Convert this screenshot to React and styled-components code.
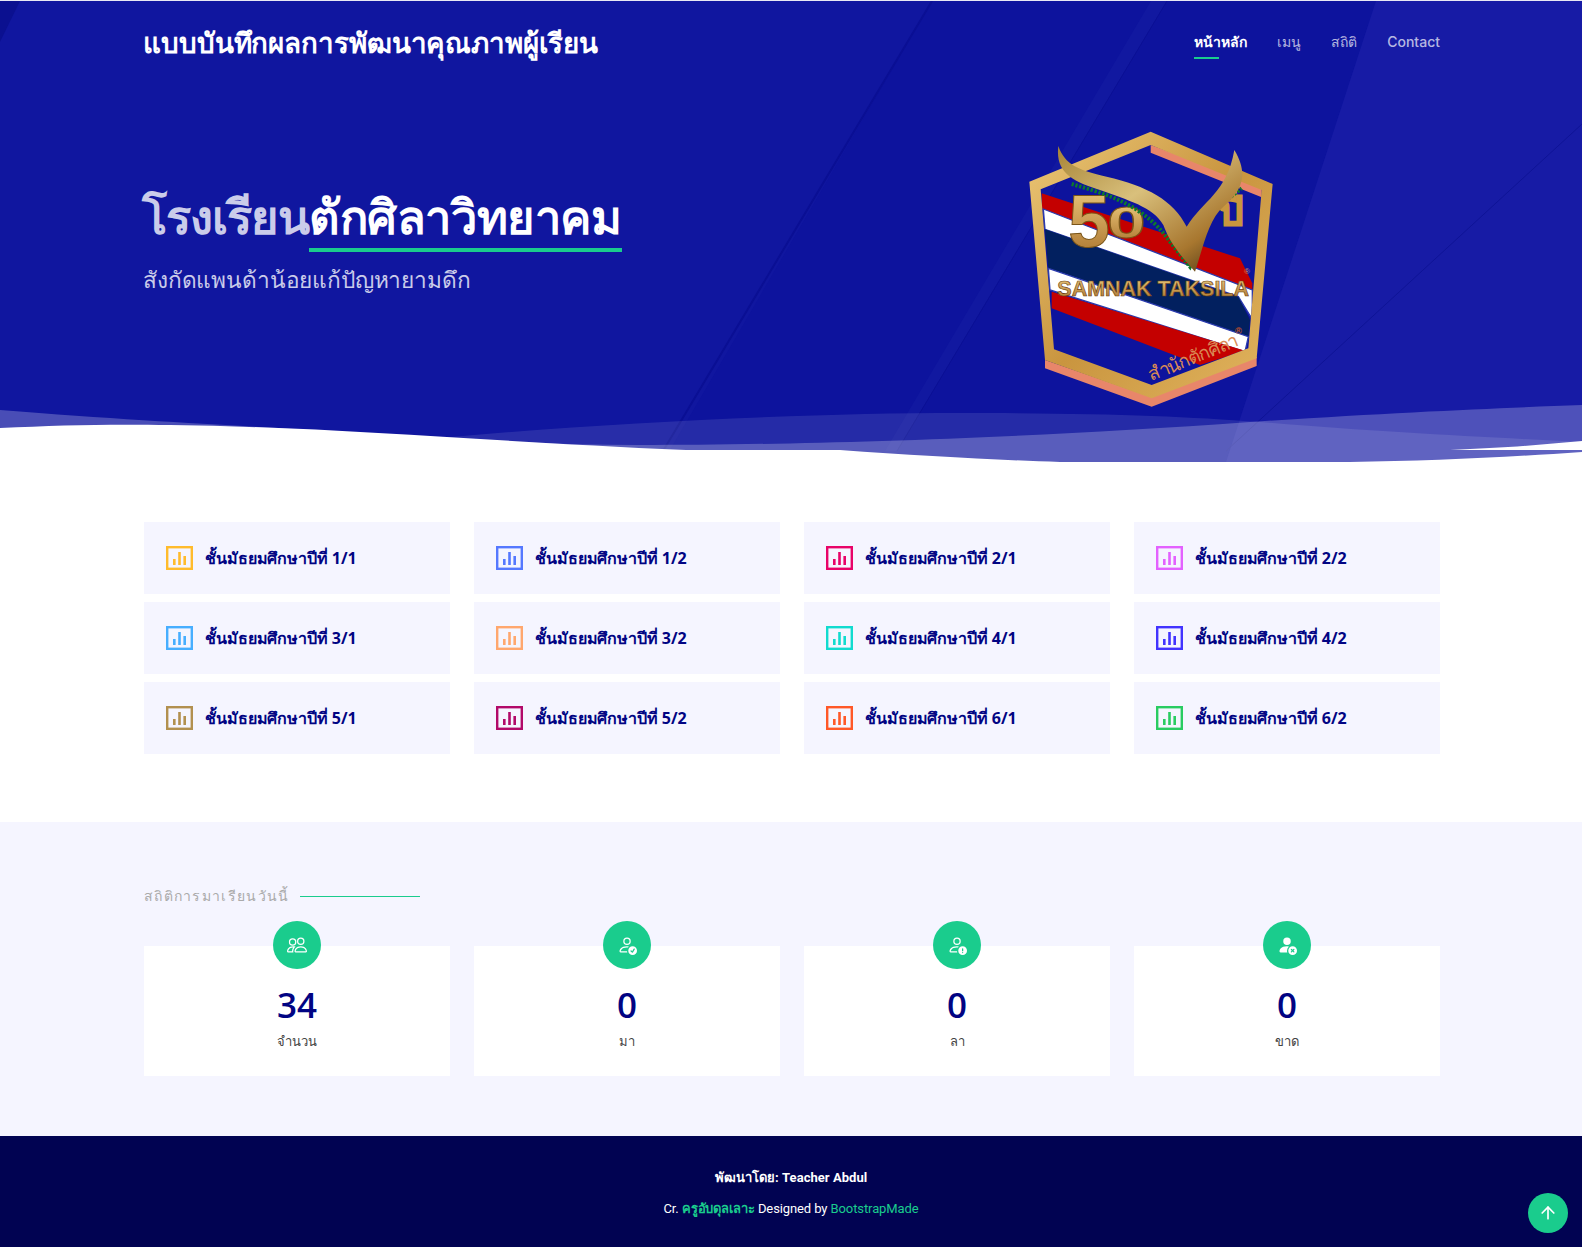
import React from "react";
import styled, { createGlobalStyle } from "styled-components";
import { BsPeople, BsPersonCheck, BsPersonExclamation, BsPersonFillX } from "react-icons/bs";
import { FiArrowUp } from "react-icons/fi";

const GlobalStyle = createGlobalStyle`
	* { box-sizing: border-box; }
	body {
		margin: 0;
		background: #fff;
		font-family: "Open Sans", "Noto Sans", sans-serif;
		color: #444;
	}
`;

const Container = styled.div`
	width: 1298px;
	margin: 0 auto;
	padding-left: 2px;
`;

const Hero = styled.section`
	position: relative;
	height: 462px;
	background: #10169f;
	border-top: 1px solid #e8e8f4;
	overflow: hidden;
`;

const HeroArt = styled.svg`
	position: absolute;
	inset: 0;
	width: 100%;
	height: 100%;
`;

const HeroInner = styled(Container)`
	position: relative;
`;

const Header = styled.header`
	display: flex;
	justify-content: space-between;
	align-items: flex-start;
	height: 84px;
`;

const Brand = styled.h1`
	margin: 23px 0 0 -1px;
	font-size: 27.75px;
	line-height: 36px;
	font-weight: 700;
	letter-spacing: -0.1px;
	color: #fff;
`;

const Nav = styled.nav`
	display: flex;
	gap: 30px;
	padding-top: 30px;
	font-family: Inter, "Noto Sans", sans-serif;
`;

const NavLink = styled.a`
	position: relative;
	height: 28px;
	font-size: 14px;
	line-height: 22px;
	font-weight: ${(props) => (props.$active ? 600 : 500)};
	color: ${(props) => (props.$active ? "#fff" : "rgba(255,255,255,.7)")};
	&::after {
		content: "";
		display: ${(props) => (props.$active ? "block" : "none")};
		position: absolute;
		left: 0;
		bottom: 0;
		width: 25px;
		height: 2px;
		background: #1acc8d;
	}
`;

const HeroBody = styled.div`
	display: flex;
	justify-content: space-between;
	align-items: flex-start;
`;

const HeroText = styled.div`
	padding-top: 97px;
`;

const HeroTitle = styled.h2`
	margin: 0 0 0 -2px;
	font-size: 47px;
	line-height: 69px;
	font-weight: 700;
	letter-spacing: -1px;
	color: rgba(255, 255, 255, 0.8);
`;

const HeroAccent = styled.span`
	display: inline-block;
	color: #fff;
	letter-spacing: -0.4px;
	border-bottom: 4px solid #1acc8d;
	line-height: 63px;
`;

const HeroSub = styled.h3`
	margin: 12px 0 0 -1px;
	font-size: 22.7px;
	line-height: 32px;
	font-weight: 400;
	letter-spacing: -0.15px;
	color: rgba(255, 255, 255, 0.78);
`;

const LogoWrap = styled.svg`
	display: block;
	width: 300px;
	height: 310px;
	margin: 25px 140px 0 0;
`;

const Classes = styled.section`
	padding: 60px 0 68px;
`;

const ClassGrid = styled.div`
	display: grid;
	grid-template-columns: repeat(4, 306px);
	column-gap: 24px;
	row-gap: 8px;
`;

const ClassCard = styled.a`
	display: flex;
	align-items: center;
	gap: 12px;
	height: 72px;
	padding-left: 22px;
	background: #f5f5ff;
`;

const ClassIcon = styled.svg`
	flex: none;
	width: 27px;
	height: 24px;
	color: ${(props) => props.$color};
`;

const ClassTitle = styled.span`
	font-size: 16px;
	font-weight: 700;
	letter-spacing: -0.1px;
	color: #010483;
`;

const Stats = styled.section`
	height: 314px;
	padding-top: 62px;
	background: #f5f5ff;
`;

const SectionLabel = styled.div`
	display: flex;
	align-items: center;
	gap: 10px;
	height: 24px;
	font-size: 14px;
	font-weight: 500;
	letter-spacing: 1.3px;
	color: #aaaaaa;
	&::after {
		content: "";
		width: 120px;
		height: 1px;
		background: #1acc8d;
	}
`;

const StatGrid = styled.div`
	display: grid;
	grid-template-columns: repeat(4, 306px);
	column-gap: 24px;
	margin-top: 38px;
`;

const StatCard = styled.div`
	position: relative;
	height: 130px;
	padding-top: 37px;
	background: #fff;
	text-align: center;
`;

const StatIcon = styled.div`
	position: absolute;
	top: -25px;
	left: 50%;
	width: 48px;
	height: 48px;
	margin-left: -24px;
	display: flex;
	align-items: center;
	justify-content: center;
	border-radius: 50%;
	background: #1acc8d;
	color: #fff;
	font-size: 20px;
`;

const StatNumber = styled.div`
	font-size: 35px;
	line-height: 44px;
	font-weight: 650;
	color: #010483;
`;

const StatLabel = styled.div`
	margin-top: 2px;
	font-size: 13px;
	line-height: 24px;
	color: #444;
`;

const Footer = styled.footer`
	height: 111px;
	padding-top: 30px;
	background: #010352;
	text-align: center;
	color: #fff;
	font-family: Roboto, "Noto Sans", sans-serif;
`;

const FooterLine = styled.div`
	font-size: 13px;
	font-weight: ${(props) => (props.$strong ? 700 : 400)};
	letter-spacing: ${(props) => (props.$strong ? "0.05px" : "-0.1px")};
	line-height: 24px;
	margin-bottom: 7px;
`;

const FooterLink = styled.a`
	color: #1acc8d;
	font-weight: ${(props) => (props.$strong ? 700 : 400)};
`;

const BackToTop = styled.a`
	position: fixed;
	right: 14px;
	bottom: 14px;
	width: 40px;
	height: 40px;
	display: flex;
	align-items: center;
	justify-content: center;
	border-radius: 50%;
	background: #1acc8d;
	color: #fff;
	font-size: 20px;
`;

const classes = [
	["1/1", "#ffbb2c"],
	["1/2", "#5578ff"],
	["2/1", "#e80368"],
	["2/2", "#e361ff"],
	["3/1", "#47aeff"],
	["3/2", "#ffa76e"],
	["4/1", "#11dbcf"],
	["4/2", "#4233ff"],
	["5/1", "#b2904f"],
	["5/2", "#b20969"],
	["6/1", "#ff5828"],
	["6/2", "#29cc61"],
];

const stats = [
	[BsPeople, "34", "จำนวน"],
	[BsPersonCheck, "0", "มา"],
	[BsPersonExclamation, "0", "ลา"],
	[BsPersonFillX, "0", "ขาด"],
];

function BarBoxIcon({ color }) {
	return (
		<ClassIcon $color={color} viewBox="0 0 27 24">
			<rect x="1.2" y="1.2" width="24.6" height="21.6" fill="none" stroke="currentColor" strokeWidth="2.4" />
			<rect x="7" y="13" width="2.6" height="6" fill="currentColor" />
			<rect x="12.2" y="6" width="2.6" height="13" fill="currentColor" />
			<rect x="17.4" y="10" width="2.6" height="9" fill="currentColor" />
		</ClassIcon>
	);
}

function HeroBackground() {
	return (
		<HeroArt viewBox="0 0 1582 461" preserveAspectRatio="none">
			<polygon points="0,0 20,0 0,41" fill="#0b1090" />
			<polygon points="932,0 1376,0 1226,461 663,461" fill="#0d139d" />
			<polygon points="1376,0 1582,0 1582,461 1226,461" fill="#171ba5" />
			<line x1="932" y1="0" x2="663" y2="450" stroke="#0a0f94" strokeWidth="2" />
			<polygon points="1151,0 1167,0 897,450 885,450" fill="#1118a0" />
			<line x1="1167" y1="0" x2="897" y2="450" stroke="#0a0f94" strokeWidth="1" />
			<line x1="1582" y1="123" x2="1226" y2="450" stroke="#0f1496" strokeWidth="1" />
			<path d="M0 461V459C200 454 350 445 474 434C640 420 820 412 960 412C1100 412 1180 415 1260 421C1380 431 1480 436 1582 441V461Z" fill="rgba(255,255,255,.1)" />
			<path d="M0 409C150 421 250 425 330 430C430 437 540 444 640 444C780 444 1000 439 1250 421C1400 411 1500 407 1582 404V461H0Z" fill="rgba(255,255,255,.24)" />
			<path d="M0 427C60 424 110 423 170 424C330 426 480 440 686 449L840 449C920 455 1000 459 1060 461H0Z" fill="#fff" />
			<path d="M1350 461C1430 460 1510 456 1582 451V461Z" fill="#fff" />
			<path d="M1450 449C1500 447 1540 444 1582 440V449Z" fill="#fff" />
		</HeroArt>
	);
}

function Logo() {
	return (
		<LogoWrap viewBox="0 0 900 930">
			<defs>
				<linearGradient id="gold" x1="0" y1="0" x2="1" y2="1">
					<stop offset="0" stopColor="#ecc878" />
					<stop offset="0.5" stopColor="#c9953f" />
					<stop offset="1" stopColor="#e2b55f" />
				</linearGradient>
				<linearGradient id="goldText" x1="0" y1="0" x2="0" y2="1">
					<stop offset="0" stopColor="#f0cf82" />
					<stop offset="1" stopColor="#a8702a" />
				</linearGradient>
				<linearGradient id="horn" x1="0" y1="0" x2="1" y2="1">
					<stop offset="0" stopColor="#a78436" />
					<stop offset="0.4" stopColor="#d9c07c" />
					<stop offset="0.75" stopColor="#a8772f" />
					<stop offset="1" stopColor="#3a2a10" />
				</linearGradient>
				<clipPath id="inside">
					<polygon points="452,128 785,245 745,715 455,825 162,718 122,238" />
				</clipPath>
			</defs>
			<g clipPath="url(#inside)">
				<polygon points="125,250 720,445 757,520 757,565 125,297" fill="#c40000" />
				<polygon points="130,297 757,540 757,628 715,560 135,358" fill="#fff" stroke="#2a3aae" strokeWidth="4" />
				<polygon points="135,358 715,560 750,630 745,680 145,475" fill="#02205f" />
				<polygon points="145,475 745,680 735,725 150,540" fill="#fff" stroke="#2a3aae" strokeWidth="4" />
				<polygon points="155,545 735,722 600,765 155,595" fill="#c40000" />
			</g>
			<path d="M452 105L785 228V262L452 128Z" fill="#e8866a" />
			<path d="M135 750L455 862L770 740V768L455 890L135 775Z" fill="#e8866a" />
			<path fillRule="evenodd" d="M452 65L818 222L770 745L455 865L135 750L88 215ZM452 105L122 238L162 718L455 825L745 715L785 240Z" fill="url(#gold)" />
			<text x="205" y="410" fontFamily="Liberation Sans, sans-serif" fontSize="225" fontWeight="700" fill="url(#goldText)" stroke="#7a5518" strokeWidth="3">5</text>
			<text x="322" y="385" fontFamily="Liberation Sans, sans-serif" fontSize="135" fontWeight="700" fill="url(#goldText)" stroke="#7a5518" strokeWidth="3" textLength="115" lengthAdjust="spacingAndGlyphs">0</text>
			<text x="655" y="345" fontFamily="Noto Sans, sans-serif" fontSize="120" fontWeight="700" fill="#c8973f" stroke="#c8973f" strokeWidth="5">ปี</text>
			<path d="M215 222C310 250 430 280 510 395L570 470L640 300L725 235" fill="none" stroke="#0c7a2c" strokeWidth="12" strokeDasharray="7 5" />
			<path d="M175 108C195 165 235 180 320 200C440 228 520 270 560 350C610 270 680 250 703 120C745 190 730 240 670 290C625 330 610 410 585 485C545 440 510 400 490 345C460 290 380 270 300 240C220 215 165 190 175 108Z" fill="url(#horn)" />
			<text x="172" y="558" fontFamily="Liberation Sans, sans-serif" fontSize="66" fontWeight="700" fill="url(#goldText)" stroke="#6e4212" strokeWidth="2" textLength="575" lengthAdjust="spacingAndGlyphs">SAMNAK TAKSILA</text>
			<text x="452" y="815" fontFamily="Noto Sans, sans-serif" fontSize="56" fontWeight="500" fill="#d98a55" textLength="285" transform="rotate(-22 452 815)">สำนักตักศิลา</text>
			<text x="732" y="492" fontFamily="Liberation Sans, sans-serif" fontSize="24" fill="#d98a55">®</text>
			<text x="705" y="672" fontFamily="Liberation Sans, sans-serif" fontSize="28" fontWeight="700" fill="#c4502a">®</text>
		</LogoWrap>
	);
}

export default function App() {
	return (
		<>
			<GlobalStyle />
			<Hero>
				<HeroBackground />
				<HeroInner>
					<Header>
						<Brand>แบบบันทึกผลการพัฒนาคุณภาพผู้เรียน</Brand>
						<Nav>
							<NavLink $active>หน้าหลัก</NavLink>
							<NavLink>เมนู</NavLink>
							<NavLink>สถิติ</NavLink>
							<NavLink>Contact</NavLink>
						</Nav>
					</Header>
					<HeroBody>
						<HeroText>
							<HeroTitle>
								โรงเรียน<HeroAccent>ตักศิลาวิทยาคม</HeroAccent>
							</HeroTitle>
							<HeroSub>สังกัดแพนด้าน้อยแก้ปัญหายามดึก</HeroSub>
						</HeroText>
						<Logo />
					</HeroBody>
				</HeroInner>
			</Hero>
			<Classes>
				<Container>
					<ClassGrid>
						{classes.map(([room, color]) => (
							<ClassCard key={room}>
								<BarBoxIcon color={color} />
								<ClassTitle>ชั้นมัธยมศึกษาปีที่ {room}</ClassTitle>
							</ClassCard>
						))}
					</ClassGrid>
				</Container>
			</Classes>
			<Stats>
				<Container>
					<SectionLabel>สถิติการมาเรียนวันนี้</SectionLabel>
					<StatGrid>
						{stats.map(([Icon, count, label]) => (
							<StatCard key={label}>
								<StatIcon>
									<Icon />
								</StatIcon>
								<StatNumber>{count}</StatNumber>
								<StatLabel>{label}</StatLabel>
							</StatCard>
						))}
					</StatGrid>
				</Container>
			</Stats>
			<Footer>
				<FooterLine $strong>พัฒนาโดย: Teacher Abdul</FooterLine>
				<FooterLine>
					Cr. <FooterLink $strong>ครูอับดุลเลาะ</FooterLink> Designed by <FooterLink>BootstrapMade</FooterLink>
				</FooterLine>
			</Footer>
			<BackToTop>
				<FiArrowUp />
			</BackToTop>
		</>
	);
}
